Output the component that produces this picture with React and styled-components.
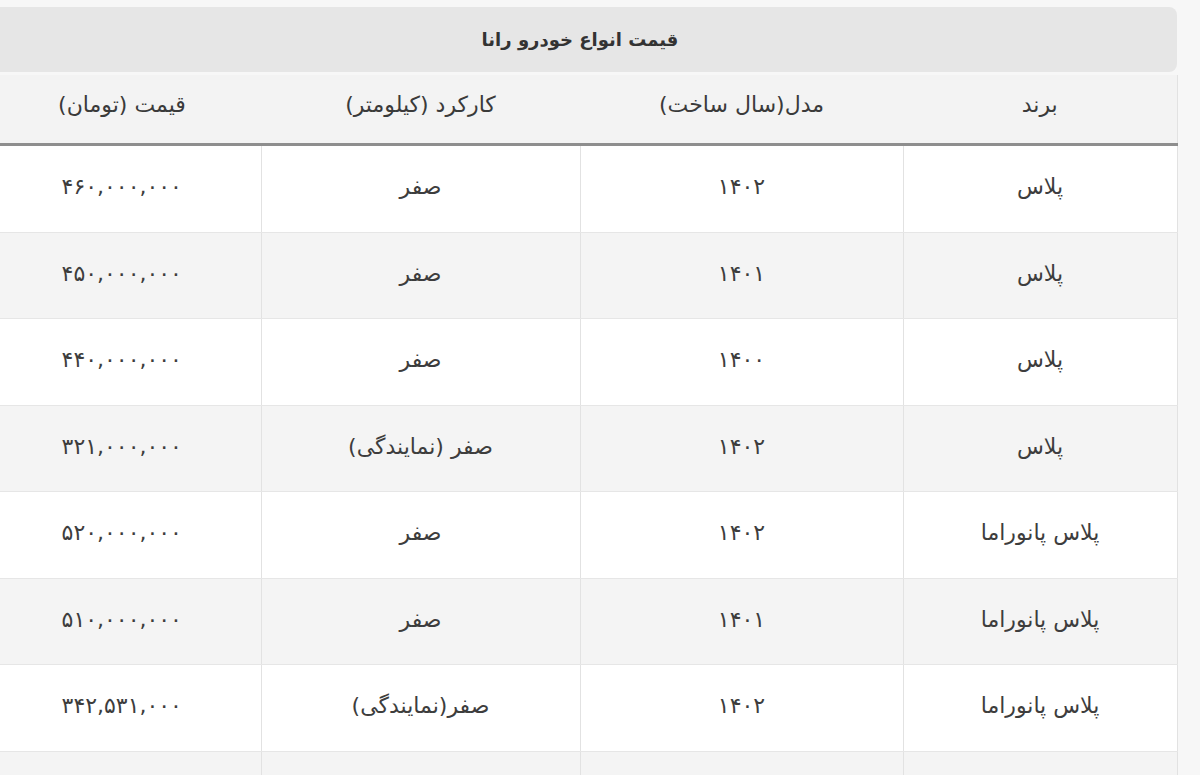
import React from "react";
import styled, { createGlobalStyle } from "styled-components";

const Global = createGlobalStyle`
  html, body { margin: 0; padding: 0; background: #f7f7f7; }
  body { font-family: "DejaVu Sans", "Noto Sans", sans-serif; overflow: hidden; }
`;

const Page = styled.div`
  width: 1200px;
  height: 775px;
  overflow: hidden;
  background: #f7f7f7;
  padding-top: 7px;
  box-sizing: border-box;
`;

const Wrap = styled.div`
  width: 1194px;
  margin-left: -17px;
`;

const Caption = styled.div`
  height: 65px;
  background: #e6e6e6;
  border-radius: 8px;
  display: flex;
  align-items: center;
  justify-content: center;
  font-weight: bold;
  font-size: 18px;
  color: #333;
  direction: rtl;
  margin-bottom: 3px;
`;

const Table = styled.table`
  width: 100%;
  border-collapse: collapse;
  table-layout: fixed;
  direction: rtl;
  border-right: 1px solid #e2e2e2;
`;

const HeadCell = styled.th`
  height: 58px;
  background: #f3f3f3;
  font-weight: normal;
  font-size: 22px;
  color: #3a3a3a;
  border-bottom: 3px solid #8e8e8e;
  text-align: center;
  padding: 0 0 10px;
  vertical-align: middle;
`;

const Row = styled.tr`
  background: ${(p) => (p.$alt ? "#f4f4f4" : "#ffffff")};
`;

const Cell = styled.td`
  height: 81.5px;
  text-align: center;
  font-size: 22px;
  color: #3d3d3d;
  letter-spacing: ${(p) => p.$spacing || 0}px;
  border-bottom: 1px solid #e6e6e6;
  border-left: 1px solid #e2e2e2;
  padding: 0 0 4px;
  vertical-align: middle;
  &:last-child { border-left: none; }
`;

const spacing = [0, 3, 0, 1];

const rows = [
  ["پلاس", "۱۴۰۲", "صفر", "۴۶۰,۰۰۰,۰۰۰"],
  ["پلاس", "۱۴۰۱", "صفر", "۴۵۰,۰۰۰,۰۰۰"],
  ["پلاس", "۱۴۰۰", "صفر", "۴۴۰,۰۰۰,۰۰۰"],
  ["پلاس", "۱۴۰۲", "صفر (نمایندگی)", "۳۲۱,۰۰۰,۰۰۰"],
  ["پلاس پانوراما", "۱۴۰۲", "صفر", "۵۲۰,۰۰۰,۰۰۰"],
  ["پلاس پانوراما", "۱۴۰۱", "صفر", "۵۱۰,۰۰۰,۰۰۰"],
  ["پلاس پانوراما", "۱۴۰۲", "صفر(نمایندگی)", "۳۴۲,۵۳۱,۰۰۰"],
  ["", "", "", ""],
];

export default function App() {
  return (
    <Page>
      <Global />
      <Wrap>
        <Caption>قیمت انواع خودرو رانا</Caption>
        <Table>
          <colgroup>
            <col style={{ width: "274px" }} />
            <col style={{ width: "323px" }} />
            <col style={{ width: "319px" }} />
            <col style={{ width: "278px" }} />
          </colgroup>
          <thead>
            <tr>
              <HeadCell>برند</HeadCell>
              <HeadCell>مدل(سال ساخت)</HeadCell>
              <HeadCell>کارکرد (کیلومتر)</HeadCell>
              <HeadCell>قیمت (تومان)</HeadCell>
            </tr>
          </thead>
          <tbody>
            {rows.map((r, i) => (
              <Row key={i} $alt={i % 2 === 1}>
                {r.map((c, j) => (
                  <Cell key={j} $spacing={spacing[j]}>{c}</Cell>
                ))}
              </Row>
            ))}
          </tbody>
        </Table>
      </Wrap>
    </Page>
  );
}
